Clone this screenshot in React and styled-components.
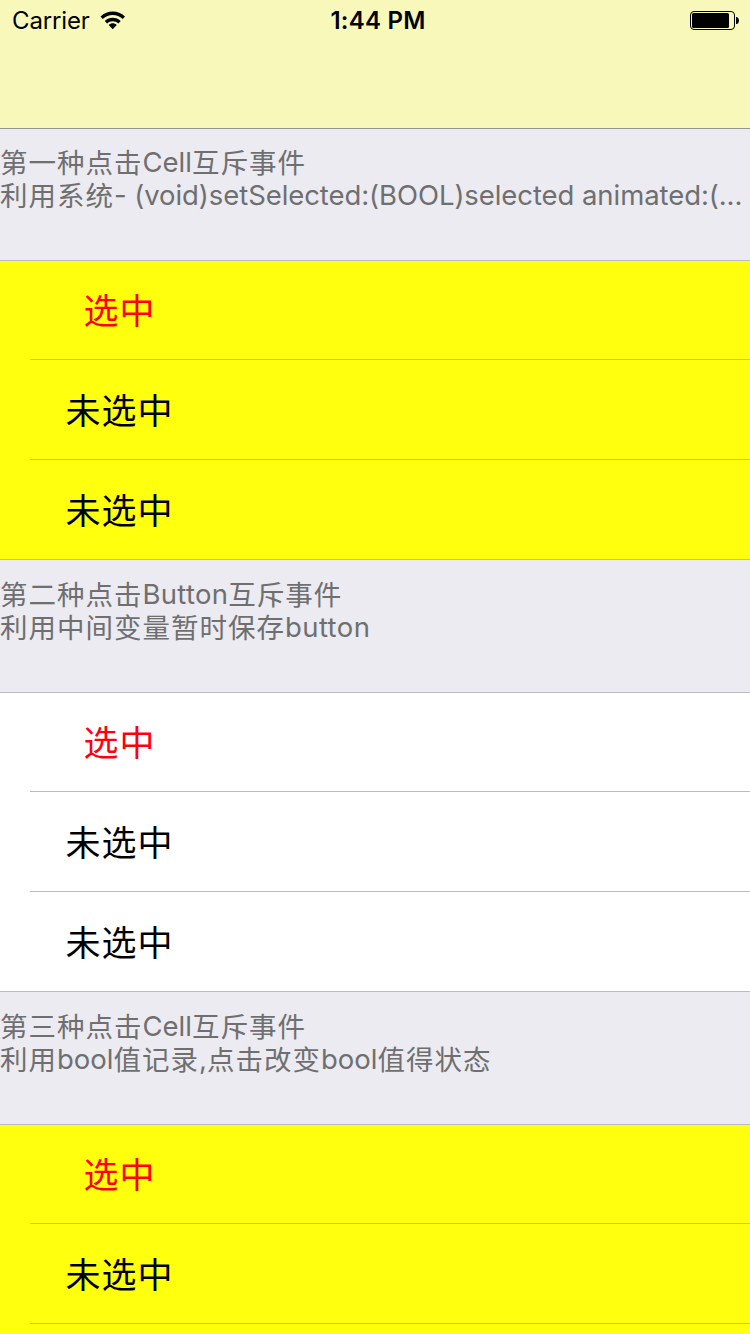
import React from "react";
import styled, { createGlobalStyle } from "styled-components";

const Global = createGlobalStyle`
  * { box-sizing: border-box; }
  body { margin: 0; background: #ebebf1; }
`;
const Screen = styled.main`
  width: 750px; height: 1334px; overflow: hidden;
  font-family: Inter, "Noto Sans CJK SC", sans-serif;
  background: #ebebf1;
`;
const NavBar = styled.header`
  height: 129px; background: #f8f8bb; border-bottom: 1px solid #959591;
`;
const StatusBar = styled.div`
  height: 42px; padding: 0 11px 0 12px;
  display: grid; grid-template-columns: 1fr auto 1fr; align-items: center;
  font-size: 24px; line-height: 42px; color: #000;
`;
const Carrier = styled.div`
  display: flex; align-items: center; gap: 10px; letter-spacing: -0.15px;
`;
const Clock = styled.div`
  padding-left: 5px; font-weight: 600; letter-spacing: 0.25px;
`;
const Battery = styled.svg`justify-self: end;`;
const SectionHeader = styled.h2`
  margin: 0; height: ${(p) => p.$height}px; padding-top: ${(p) => p.$top}px;
  font-size: 27.5px; font-weight: 400; line-height: 33px; color: #6f6f70;
`;
const Line = styled.div`
  height: 33px; white-space: nowrap; letter-spacing: 1px;
`;
const Latin = styled.span`
  line-height: 1; vertical-align: 1px; letter-spacing: ${(p) => p.$spacing}px;
`;
const Cells = styled.div`
  background: ${(p) => p.$color};
  border-top: 1px solid #bcbac1;
  border-bottom: 1px solid #bcbac1;
`;
const Cell = styled.div`
  height: 100px; margin-left: 30px; padding: 0 541px 3px 0;
  display: flex; align-items: center; justify-content: center;
  font-size: 35px; letter-spacing: 1px; white-space: nowrap;
  color: ${(p) => (p.$selected ? "#ff0010" : "#000")};
  border-bottom: 1px solid ${(p) => p.$line};
  &:first-child { height: 99px; }
  &:last-child { height: 99px; border-bottom: 0; }
`;

const YELLOW = { color: "#ffff0e", line: "#bcbc9c" };
const WHITE = { color: "#ffffff", line: "#bcbac1" };

const sections = [
  {
    height: 131, top: 18, theme: YELLOW, cells: ["选中", "未选中", "未选中"],
    lines: [
      { text: "第一种点击Cell互斥事件", spacing: 0 },
      { text: "利用系统- (void)setSelected:(BOOL)selected animated:(...", spacing: -0.07 },
    ],
  },
  {
    height: 132, top: 19, theme: WHITE, cells: ["选中", "未选中", "未选中"],
    lines: [
      { text: "第二种点击Button互斥事件", spacing: 0.3 },
      { text: "利用中间变量暂时保存button", spacing: 0.4 },
    ],
  },
  {
    height: 132, top: 19, theme: YELLOW, cells: ["选中", "未选中", ""],
    lines: [
      { text: "第三种点击Cell互斥事件", spacing: 0 },
      { text: "利用bool值记录,点击改变bool值得状态", spacing: 0 },
    ],
  },
];

function HeaderLine({ text, spacing }) {
  return (
    <Line>
      {text.split(/([\x20-\x7e]+)/).map((run, i) =>
        i % 2 ? <Latin key={i} $spacing={spacing}>{run}</Latin> : run
      )}
    </Line>
  );
}

export default function App() {
  return (
    <Screen>
      <Global />
      <NavBar>
        <StatusBar>
          <Carrier>
            Carrier
            <svg width="26" height="20" viewBox="0 0 26 20">
              <path d="M.5 5.500C7.500-1.300 18-1.300 25 5.500l-2.300 2.500C17 2.600 8.500 2.600 2.800 8zM4.800 10c4.600-4.400 11.300-4.400 15.900 0l-2.300 2.400c-3.200-3-8.100-3-11.300 0zM8.700 14c2.500-2.200 5.600-2.200 8.100 0l-4.050 4.300z" />
            </svg>
          </Carrier>
          <Clock>1:44 PM</Clock>
          <Battery width="49" height="20" viewBox="0 0 49 20">
            <rect x=".5" y=".5" width="44" height="18" rx="3.5" fill="none" stroke="#000" />
            <rect x="2" y="2" width="37" height="15" rx="1.5" />
            <path d="M46 6h1q2 1 2 3.500t-2 3.500h-1z" />
          </Battery>
        </StatusBar>
      </NavBar>
      {sections.map((s) => (
        <section key={s.lines[0].text}>
          <SectionHeader $height={s.height} $top={s.top}>
            {s.lines.map((l) => <HeaderLine key={l.text} {...l} />)}
          </SectionHeader>
          <Cells $color={s.theme.color}>
            {s.cells.map((label, i) => (
              <Cell key={i} $selected={i === 0} $line={s.theme.line}>{label}</Cell>
            ))}
          </Cells>
        </section>
      ))}
    </Screen>
  );
}
